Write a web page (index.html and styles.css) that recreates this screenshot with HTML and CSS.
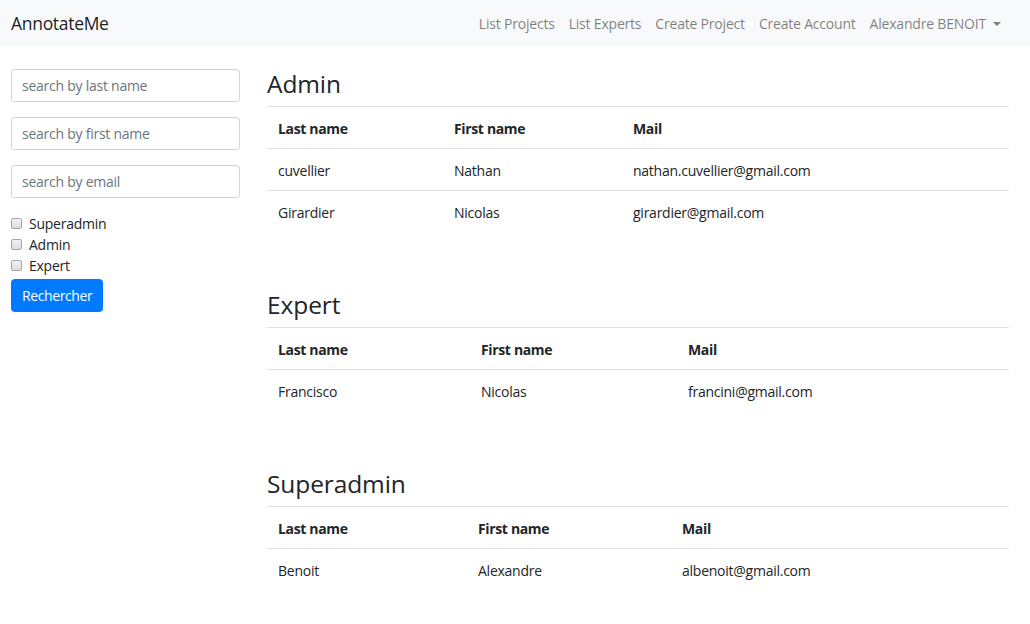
FILE: index.html
```html
<!DOCTYPE html>
<html lang="en">
<head>
<meta charset="utf-8">
<title>AnnotateMe</title>
<link rel="stylesheet" href="styles.css">
</head>
<body>
<nav class="navbar">
  <a class="brand" href="#">AnnotateMe</a>
  <ul class="nav">
    <li><a class="nav-link" href="#">List Projects</a></li>
    <li><a class="nav-link" href="#">List Experts</a></li>
    <li><a class="nav-link" href="#">Create Project</a></li>
    <li><a class="nav-link" href="#">Create Account</a></li>
    <li><a class="nav-link dropdown-toggle" href="#">Alexandre BENOIT</a></li>
  </ul>
</nav>
<div class="layout">
  <aside class="sidebar">
    <form class="search">
      <input class="form-control" type="text" placeholder="search by last name">
      <input class="form-control" type="text" placeholder="search by first name">
      <input class="form-control" type="text" placeholder="search by email">
      <div class="checks">
        <label class="check"><input type="checkbox"><span>Superadmin</span></label>
        <label class="check"><input type="checkbox"><span>Admin</span></label>
        <label class="check"><input type="checkbox"><span>Expert</span></label>
      </div>
      <button class="btn" type="button">Rechercher</button>
    </form>
  </aside>
  <main class="content">
    <section class="group">
      <h2>Admin</h2>
      <table class="table cols-admin">
        <thead><tr><th>Last name</th><th>First name</th><th>Mail</th></tr></thead>
        <tbody>
          <tr><td>cuvellier</td><td>Nathan</td><td>nathan.cuvellier@gmail.com</td></tr>
          <tr><td>Girardier</td><td>Nicolas</td><td>girardier@gmail.com</td></tr>
        </tbody>
      </table>
    </section>
    <section class="group">
      <h2>Expert</h2>
      <table class="table cols-expert">
        <thead><tr><th>Last name</th><th>First name</th><th>Mail</th></tr></thead>
        <tbody>
          <tr><td>Francisco</td><td>Nicolas</td><td>francini@gmail.com</td></tr>
        </tbody>
      </table>
    </section>
    <section class="group">
      <h2>Superadmin</h2>
      <table class="table cols-super">
        <thead><tr><th>Last name</th><th>First name</th><th>Mail</th></tr></thead>
        <tbody>
          <tr><td>Benoit</td><td>Alexandre</td><td>albenoit@gmail.com</td></tr>
        </tbody>
      </table>
    </section>
  </main>
</div>
</body>
</html>
```

FILE: styles.css
```css
* { box-sizing: border-box; }
html, body { margin: 0; padding: 0; }
body {
  font-family: "Open Sans", "Liberation Sans", sans-serif;
  font-size: 14px;
  line-height: 21px;
  color: #212529;
  background: #fff;
  letter-spacing: -0.25px;
}
a { text-decoration: none; }

.navbar {
  height: 46px;
  background: #f8f9fa;
  display: flex;
  align-items: center;
  justify-content: space-between;
  padding: 0 22px 0 11px;
}
.brand {
  font-size: 17.5px;
  color: rgba(0,0,0,.9);
  letter-spacing: -0.3px;
}
.nav {
  list-style: none;
  margin: 0;
  padding: 0;
  display: flex;
}
.nav-link {
  display: block;
  padding: 7px;
  color: rgba(0,0,0,.5);
  letter-spacing: -0.2px;
}
.dropdown-toggle::after {
  content: "";
  display: inline-block;
  margin-left: 7px;
  vertical-align: 3px;
  border-top: 4.5px solid;
  border-left: 4px solid transparent;
  border-right: 4px solid transparent;
}

.layout {
  display: grid;
  grid-template-columns: 229px 1fr;
  column-gap: 27px;
  padding: 23px 21px 0 11px;
}

.search { display: flex; flex-direction: column; align-items: flex-start; }
.form-control {
  width: 100%;
  height: 33px;
  padding: 5px 10px;
  margin: 0 0 15px;
  font: inherit;
  letter-spacing: inherit;
  color: #495057;
  border: 1px solid #ced4da;
  border-radius: 3.5px;
  background: #fff;
}
.form-control::placeholder { color: #6c757d; }

.checks { display: flex; flex-direction: column; }
.check {
  display: flex;
  align-items: center;
  height: 21px;
}
.check input {
  appearance: none;
  -webkit-appearance: none;
  width: 11px;
  height: 11px;
  margin: 0 7px 1px 0;
  border: 1px solid #a6a6a6;
  border-radius: 2px;
  background: linear-gradient(#f2f2f2, #dcdcdc);
}

.btn {
  margin-top: 3px;
  height: 33px;
  padding: 0 10px;
  font: inherit;
  letter-spacing: -0.4px;
  color: #fff;
  background: #007bff;
  border: 1px solid #007bff;
  border-radius: 3.5px;
}

.content { min-width: 0; }
.group h2 {
  margin: 0 0 7px;
  font-size: 24.5px;
  line-height: 30px;
  font-weight: 500;
  letter-spacing: -0.1px;
}
.table {
  width: 100%;
  border-collapse: collapse;
  table-layout: fixed;
  margin-bottom: 58px;
}
.table th, .table td {
  text-align: left;
  padding: 10.5px 11px 9.5px;
  border-top: 1px solid #dee2e6;
  vertical-align: top;
}
.table th { font-weight: 700; letter-spacing: -0.35px; }

.cols-admin th:nth-child(1) { width: 176px; }
.cols-admin th:nth-child(2) { width: 179px; }
.cols-expert th:nth-child(1) { width: 203px; }
.cols-expert th:nth-child(2) { width: 207px; }
.cols-super th:nth-child(1) { width: 200px; }
.cols-super th:nth-child(2) { width: 204px; }
```
